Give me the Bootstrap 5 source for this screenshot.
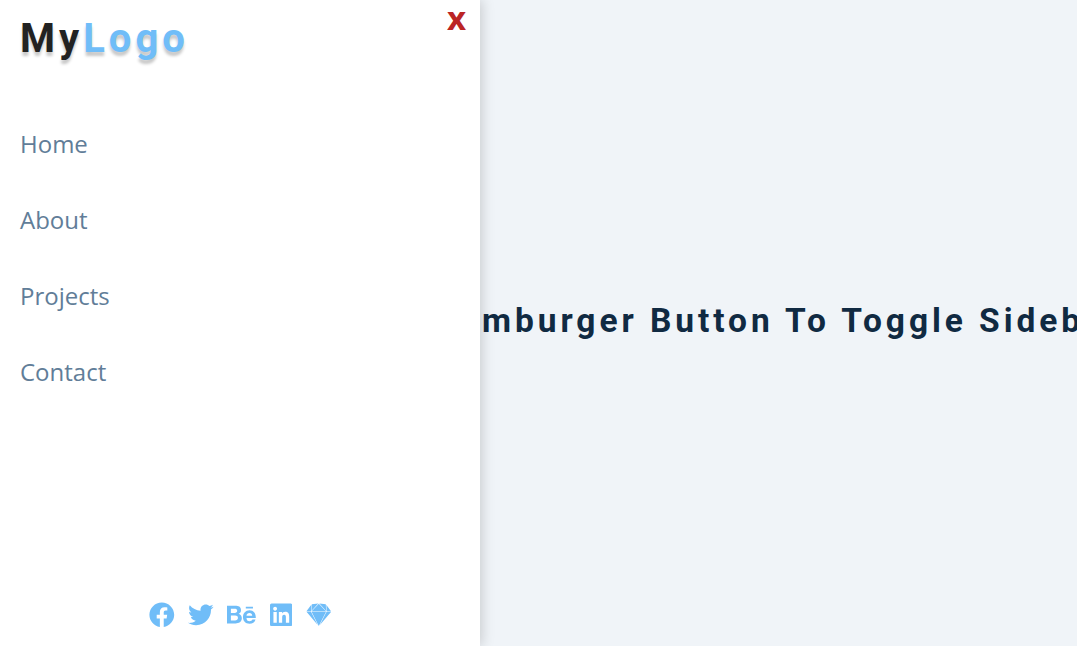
<!DOCTYPE html>
<html lang="en">
<head>
<meta charset="utf-8">
<meta name="viewport" content="width=device-width, initial-scale=1">
<title>MyLogo</title>
<link href="https://cdn.jsdelivr.net/npm/bootstrap@5.3.0/dist/css/bootstrap.min.css" rel="stylesheet">
<style>
body { background: #f0f4f8; font-family: "Open Sans", sans-serif; }
.sidebar { width: 480px; background: #fff; box-shadow: 2px 0 12px rgba(0,0,0,.17); z-index: 2; }
.site-logo { font: 700 40px/48px Roboto, sans-serif; letter-spacing: 4px; color: #222; text-shadow: 0 4px 3px rgba(0,0,0,.22); padding: 15px 0 0 20px; }
.site-logo span { color: #70bdf8; }
.close-btn { font: 700 33px/36px "Open Sans", sans-serif; color: #bb2525; margin-right: 14px; }
.menu { margin-top: 43px; }
.menu a { font-size: 24px; line-height: 36px; padding: 20px; color: #617d98; }
.social { gap: 13.5px; padding: 0 0 18.5px .4px; color: #70bdf8; }
.social svg { height: 25.6px; fill: currentColor; display: block; }
.headline { font: 700 33.5px/40px Roboto, sans-serif; letter-spacing: 3.94px; color: #102a42; padding-left: 2px; margin-bottom: 4px; }
</style>
</head>
<body>
<div class="d-flex vh-100 overflow-hidden">
  <aside class="sidebar d-flex flex-column flex-shrink-0 position-relative">
    <div class="d-flex justify-content-between align-items-start">
      <div class="site-logo">My<span>Logo</span></div>
      <button class="close-btn border-0 bg-transparent p-0" type="button">x</button>
    </div>
    <nav class="menu nav flex-column">
      <a class="nav-link" href="#">Home</a>
      <a class="nav-link" href="#">About</a>
      <a class="nav-link" href="#">Projects</a>
      <a class="nav-link" href="#">Contact</a>
    </nav>
    <div class="social d-flex justify-content-center mt-auto">
      <svg viewBox="0 0 512 512"><path d="M504 256C504 119 393 8 256 8S8 119 8 256c0 123.78 90.69 226.38 209.25 245V327.69h-63V256h63v-54.64c0-62.15 37-96.48 93.67-96.48 27.14 0 55.52 4.84 55.52 4.84v61h-31.28c-30.8 0-40.41 19.12-40.41 38.73V256h68.78l-11 71.69h-57.78V501C413.31 482.38 504 379.78 504 256z"/></svg>
      <svg viewBox="0 0 512 512"><path d="M459.37 151.716c.325 4.548.325 9.097.325 13.645 0 138.72-105.583 298.558-298.558 298.558-59.452 0-114.68-17.219-161.137-47.106 8.447.974 16.568 1.299 25.34 1.299 49.055 0 94.213-16.568 130.274-44.832-46.132-.975-84.792-31.188-98.112-72.772 6.498.974 12.995 1.624 19.818 1.624 9.421 0 18.843-1.3 27.614-3.573-48.081-9.747-84.143-51.98-84.143-102.985v-1.299c13.969 7.797 30.214 12.67 47.431 13.319-28.264-18.843-46.781-51.005-46.781-87.391 0-19.492 5.197-37.36 14.294-52.954 51.655 63.675 129.3 105.258 216.365 109.807-1.624-7.797-2.599-15.918-2.599-24.04 0-57.828 46.782-104.934 104.934-104.934 30.213 0 57.502 12.67 76.67 33.137 23.715-4.548 46.456-13.32 66.599-25.34-7.798 24.366-24.366 44.833-46.132 57.827 21.117-2.273 41.584-8.122 60.426-16.243-14.292 20.791-32.161 39.308-52.628 54.253z"/></svg>
      <svg viewBox="0 0 576 512"><path d="M232 237.2c31.8-15.2 48.4-38.2 48.4-74 0-70.6-52.6-87.8-113.3-87.8H0v354.4h171.8c64.4 0 124.9-30.9 124.9-102.9 0-44.5-21.1-77.4-64.7-89.7zM77.9 135.9H151c28.1 0 53.4 7.9 53.4 40.5 0 30.1-19.7 42.2-47.5 42.2h-79v-82.7zm83.3 233.7H77.9V272h84.9c34.3 0 56 14.3 56 50.6 0 35.8-25.9 47-57.6 47zm358.5-240.7H376V94h143.7v34.9zM576 305.2c0-75.9-44.4-139.2-124.9-139.2-78.2 0-131.3 58.8-131.3 135.8 0 79.9 50.3 134.7 131.3 134.7 61.3 0 101-27.6 120.1-86.3H509c-6.7 21.9-34.3 33.5-55.7 33.5-41.3 0-63-24.2-63-65.3h185.1c.3-4.2.6-8.7.6-13.2zM390.4 274c2.3-33.7 24.7-54.8 58.5-54.8 35.4 0 53.2 20.8 56.2 54.8H390.4z"/></svg>
      <svg viewBox="0 0 448 512"><path d="M416 32H31.9C14.3 32 0 46.5 0 64.3v383.4C0 465.5 14.3 480 31.9 480H416c17.6 0 32-14.5 32-32.3V64.3c0-17.8-14.4-32.3-32-32.3zM135.4 416H69V202.2h66.5V416zm-33.2-243c-21.3 0-38.5-17.3-38.5-38.5S80.9 96 102.2 96c21.2 0 38.5 17.3 38.5 38.5 0 21.3-17.2 38.5-38.5 38.5zm282.1 243h-66.4V312c0-24.8-.5-56.7-34.5-56.7-34.6 0-39.9 27-39.9 54.9V416h-66.4V202.2h63.7v29.2h.9c8.9-16.8 30.6-34.5 62.9-34.5 67.2 0 79.7 44.3 79.7 101.9V416z"/></svg>
      <svg viewBox="0 0 512 512"><path d="M27.5 162.2L9 187.1h90.5l6.9-130.7-78.9 105.8zM396.3 45.7L267.7 32l135.7 147.1-7.1-133.4zM112.2 218.3l-11.2-22H9.9L234.8 458zm2-31.2h284L256.3 33zm297.3 9.1L277.6 458l224.8-261.7h-90.9zM415.4 69L406 56.4l.9 17.3 6.1 113.4h90.3zM113.5 93.5l-4.6 85.6L244.7 32 116.1 45.7zM401.2 196.2h-290l42.4 82.9L256.3 480l144.9-283.8z"/></svg>
    </div>
  </aside>
  <main class="d-flex align-items-center flex-grow-1 overflow-hidden">
    <h1 class="headline text-nowrap">mburger Button To Toggle Sideb</h1>
  </main>
</div>
<script src="https://cdn.jsdelivr.net/npm/bootstrap@5.3.0/dist/js/bootstrap.bundle.min.js"></script>
</body>
</html>
